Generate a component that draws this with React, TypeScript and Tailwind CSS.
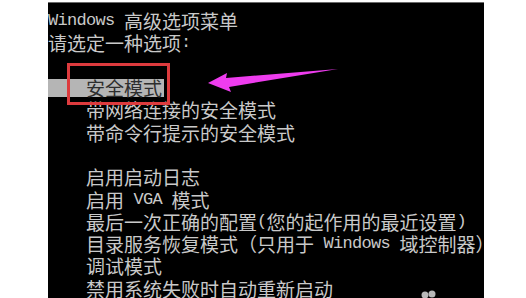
const lines: string[] = [
    "Windows 高级选项菜单",
    "请选定一种选项:",
    "",
    "    安全模式",
    "    带网络连接的安全模式",
    "    带命令行提示的安全模式",
    "",
    "    启用启动日志",
    "    启用 VGA 模式",
    "    最后一次正确的配置(您的起作用的最近设置)",
    "    目录服务恢复模式（只用于 Windows 域控制器）",
    "    调试模式",
    "    禁用系统失败时自动重新启动",
];

// split a line into ascii (half-width) and cjk (full-width) runs
function Runs({ text }: { text: string }) {
    const runs = text.match(/[\x20-\x7e]+|[^\x20-\x7e]+/g) ?? [];
    return (
        <>
            {runs.map((r, i) =>
                /^[\x20-\x7e]/.test(r) ? (
                    <span
                        key={i}
                        className="text-[17px] tracking-[-0.7px] [font-family:'Liberation_Mono',monospace]"
                    >
                        {r}
                    </span>
                ) : (
                    <span key={i}>{r}</span>
                )
            )}
        </>
    );
}

export default function App() {
    return (
        <div className="relative h-[298px] w-[526px] overflow-hidden bg-white">
            <div className="ml-[48px] mt-[2px] h-[296px] w-[436px] overflow-hidden border-t border-[#6a6a6a] bg-black pt-[7px] text-[19px] leading-[20px] text-[#c9c9c9] [font-family:'Noto_Sans_CJK_SC',sans-serif]">
                {lines.map((line, i) =>
                    i === 3 ? (
                        <div key={i} className="flex h-[22.3px] items-center whitespace-pre">
                            <span className="flex h-[18px] items-center bg-[#b5b5b5] pr-[2px] text-[#2e2e2e]">
                                <Runs text={line} />
                            </span>
                        </div>
                    ) : (
                        <div key={i} className="flex h-[22.3px] items-center whitespace-pre">
                            <Runs text={line} />
                        </div>
                    )
                )}
            </div>

            {/* red highlight box */}
            <div className="absolute left-[67px] top-[63px] h-[42px] w-[103px] border-[3px] border-[#dd3b3e]" />

            {/* pink arrow + watermark */}
            <svg className="absolute left-0 top-0" width="526" height="298">
                <polygon
                    points="208,83 227,73 226,78 338,69 229,87 231,92"
                    fill="#ee3cee"
                />
                <circle cx="425" cy="295" r="3.5" fill="#b8b8b8" />
                <circle cx="432" cy="294" r="3.5" fill="#b8b8b8" />
            </svg>
        </div>
    );
}
